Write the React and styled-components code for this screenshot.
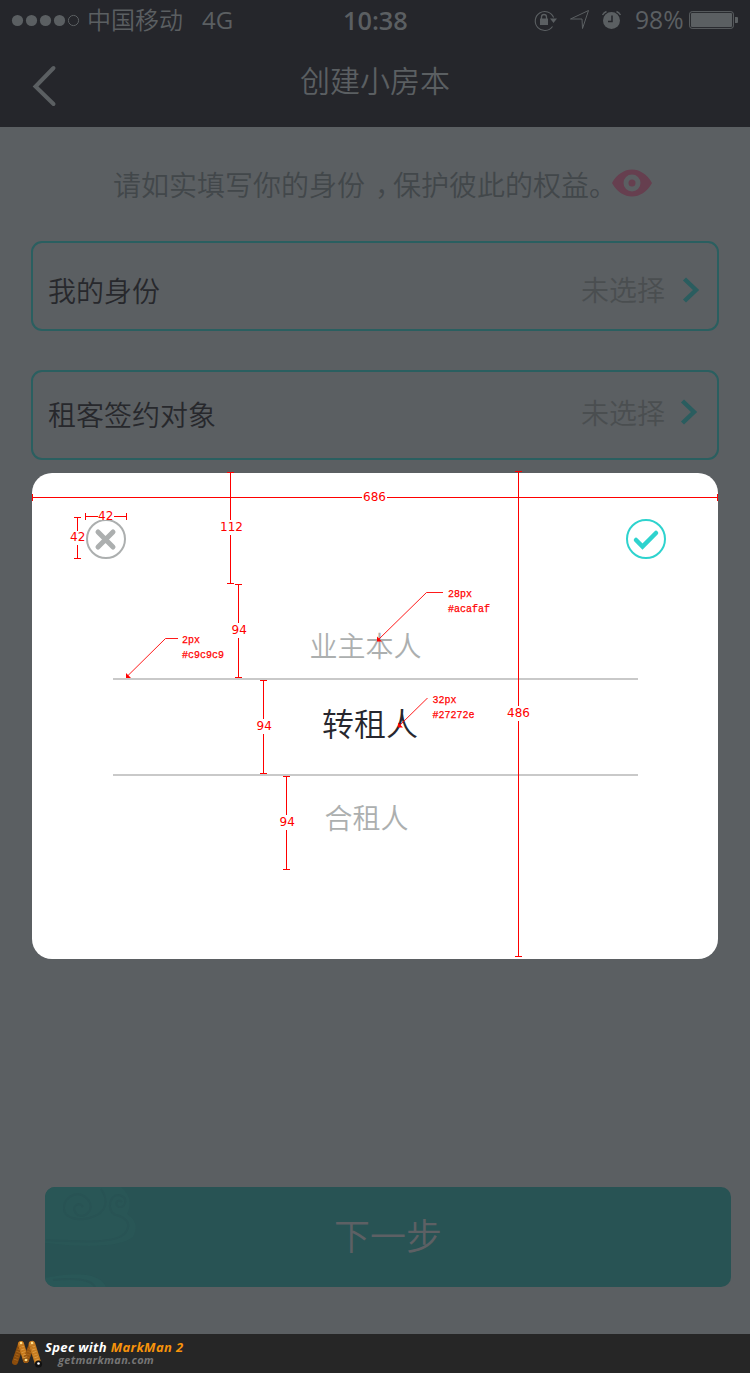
import React from 'react';
import styled, { createGlobalStyle } from 'styled-components';

const cjk = '"Noto Sans CJK SC", sans-serif';
const latin = '"Open Sans", "Noto Sans", sans-serif';

const GlobalStyle = createGlobalStyle`
  * { box-sizing: border-box; }
  body { margin: 0; background: #5b5f62; }
`;

const Screen = styled.div`
  position: relative;
  display: flex;
  flex-direction: column;
  width: 750px;
  height: 1373px;
  overflow: hidden;
  background: #5b5f62;
  font-family: ${cjk};
  font-weight: 350;
`;

const Header = styled.header`
  height: 127px;
  background: #25262b;
  color: #5b5f62;
`;

const StatusBar = styled.div`
  display: grid;
  grid-template-columns: 343px 65px 1fr;
  align-items: center;
  height: 40px;
`;

const StatusGroup = styled.div`
  display: flex;
  align-items: center;
  padding-left: ${(p) => p.$indent}px;
  white-space: nowrap;
`;

const Signal = styled.svg`
  flex: none;
  width: 70px;
  height: 14px;
  margin-right: 6px;
`;

const Carrier = styled.span`
  width: 115px;
  height: 40px;
  font-size: 24px;
  line-height: 38px;
`;

const StatusText = styled.span`
  font-family: ${latin};
  font-size: ${(p) => p.$size || 24}px;
  font-weight: ${(p) => (p.$bold ? 600 : 400)};
  line-height: 40px;
  white-space: nowrap;
`;

const StatusIcons = styled.svg`
  flex: none;
  width: 102px;
  height: 40px;
`;

const Battery = styled.svg`
  flex: none;
  width: 50px;
  height: 40px;
  margin-left: 5px;
`;

const NavBar = styled.div`
  display: grid;
  grid-template-columns: 100px 1fr 100px;
  height: 87px;
`;

const BackIcon = styled.svg`
  width: 26px;
  height: 42px;
  margin: 25px 0 0 32px;
`;

const Title = styled.h1`
  margin: 0;
  font-size: 30px;
  font-weight: 350;
  line-height: 78px;
  text-align: center;
`;

const Main = styled.main`
  flex: 1;
  display: flex;
  flex-direction: column;
  padding: 0 31px;
`;

const Notice = styled.div`
  display: flex;
  align-items: center;
  height: 114px;
  padding-left: 82px;
  color: #42474a;
  font-size: 28px;
  line-height: 114px;
  white-space: nowrap;
`;

const Comma = styled.span`
  display: inline-block;
  width: 28px;
  padding-left: 10px;
  font-feature-settings: "halt";
`;

const Eye = styled.svg`
  flex: none;
  width: 40px;
  height: 28px;
  margin: 0 0 2px -5px;
`;

const Field = styled.div`
  display: flex;
  justify-content: space-between;
  height: 90px;
  margin-bottom: ${(p) => p.$after || 0}px;
  padding: 0 17px 0 15px;
  border: 2px solid #2a5f60;
  border-radius: 11px;
  font-size: 28px;
`;

const FieldLabel = styled.span`
  color: #27282c;
  line-height: ${(p) => p.$line}px;
`;

const FieldValue = styled.span`
  display: flex;
  color: #4a4e50;
  line-height: ${(p) => p.$line}px;
`;

const Chevron = styled.svg`
  width: 18px;
  height: 26px;
  margin: ${(p) => p.$top}px ${(p) => p.$right}px 0 ${(p) => 17 - p.$right}px;
`;

const NextButton = styled.button`
  position: relative;
  width: 686px;
  height: 100px;
  margin: 727px 0 0 14px;
  padding: 0 0 5px;
  overflow: hidden;
  border: 0;
  border-radius: 10px;
  background: #285354;
  color: #5d6064;
  font: 350 36px/95px ${cjk};
`;

const Cloud = styled.svg`
  position: absolute;
  left: 0;
  top: 0;
  width: 110px;
  height: 100px;
`;

const Picker = styled.section`
  position: absolute;
  left: 32px;
  top: 473px;
  width: 686px;
  height: 486px;
  padding: 46px 51px 0 53px;
  border-radius: 20px;
  background: #fff;
`;

const PickerActions = styled.div`
  display: flex;
  justify-content: space-between;
  height: 65px;
`;

const RoundIcon = styled.svg`
  width: 42px;
  height: 42px;
`;

const Options = styled.ul`
  width: 525px;
  margin: 0 0 0 28px;
  padding: 0;
  list-style: none;
`;

const Option = styled.li`
  height: ${(p) => (p.$selected ? 98 : 94)}px;
  padding-right: ${(p) => p.$shift}px;
  border: solid #c9c9c9;
  border-width: ${(p) => (p.$selected ? '2px 0' : '0')};
  color: ${(p) => (p.$selected ? '#27272e' : '#acafaf')};
  font-size: ${(p) => (p.$selected ? 32 : 28)}px;
  line-height: ${(p) => p.$line}px;
  text-align: center;
`;

const Spec = styled.svg`
  position: absolute;
  left: 0;
  top: 0;
  width: 750px;
  height: 1000px;
  font-weight: 400;
  pointer-events: none;
`;

const Footer = styled.footer`
  display: flex;
  gap: 2px;
  height: 39px;
  padding: 4px 11px 0;
  background: #262626;
  font-family: ${latin};
  font-style: italic;
  font-weight: 700;
`;

const Logo = styled.svg`
  flex: none;
  width: 32px;
  height: 32px;
`;

const FooterText = styled.div`
  display: flex;
  flex-direction: column;
  color: #fff;
  font-size: 13px;
  line-height: 19px;
  letter-spacing: 0.35px;
  white-space: nowrap;
`;

const Brand = styled.span`
  color: #f7930b;
`;

const Site = styled.span`
  padding-left: 13px;
  color: #757575;
  font-size: 11px;
  line-height: 6px;
  letter-spacing: 0.3px;
`;

const H = ({ x1, x2, y, label, tx, ty, gap }) => (
  <g>
    <path shapeRendering="crispEdges" d={`M${x1} ${y + 0.5}H${gap[0]}M${gap[1]} ${y + 0.5}H${x2 + 1}M${x1 + 0.5} ${y - 3}v7M${x2 + 0.5} ${y - 3}v7`} stroke="#f00" fill="none" />
    <text x={tx} y={ty} fontSize="12" fontFamily="DejaVu Sans">{label}</text>
  </g>
);

const V = ({ x, y1, y2, label, tx, ty, gap }) => (
  <g>
    <path shapeRendering="crispEdges" d={`M${x + 0.5} ${y1}V${gap[0]}M${x + 0.5} ${gap[1]}V${y2 + 1}M${x - 3} ${y1 + 0.5}h7M${x - 3} ${y2 + 0.5}h7`} stroke="#f00" fill="none" />
    <text x={tx} y={ty} fontSize="12" fontFamily="DejaVu Sans">{label}</text>
  </g>
);

const Note = ({ tip, elbow, end, x, y, lines }) => (
  <g>
    <path d={`M${tip[0] + 1} ${tip[1] - 1}L${elbow[0]} ${elbow[1]}H${end}`} stroke="#f00" strokeWidth=".9" fill="none" />
    <path d={`M${tip[0]} ${tip[1] - 4.5}V${tip[1] + 0.5}H${tip[0] + 5}Z`} />
    {lines.map((l, i) => (
      <text key={l} x={x} y={y + i * 15} fontSize="10" stroke="#f00" strokeWidth=".25" fontFamily="Liberation Mono">{l}</text>
    ))}
  </g>
);

const ChevronIcon = ({ top, right }) => (
  <Chevron $top={top} $right={right} viewBox="0 0 18 26">
    <path d="M2.5 2L14 13 2.5 24" fill="none" stroke="#2a5d5f" strokeWidth="4.4" />
  </Chevron>
);

export default function App() {
  return (
    <Screen>
      <GlobalStyle />
      <Header>
        <StatusBar>
          <StatusGroup $indent={11}>
            <Signal viewBox="0 0 70 14" fill="currentColor">
              {[6.5, 20.5, 34.5, 48.5].map((x) => <circle key={x} cx={x} cy="7.5" r="5.6" />)}
              <circle cx="62.5" cy="7.5" r="5.1" fill="none" stroke="currentColor" />
            </Signal>
            <Carrier>中国移动</Carrier>
            <StatusText>4G</StatusText>
          </StatusGroup>
          <StatusText $bold $size={25.3}>10:38</StatusText>
          <StatusGroup $indent={125}>
            <StatusIcons viewBox="533 0 102 40" fill="none" stroke="currentColor">
              <path d="M552.5 26.5A9.5 9.5 0 1 1 553.6 17.5" strokeWidth="1.1" />
              <path d="M550 18.5h7l-3.500 4.500z" fill="currentColor" stroke="none" />
              <path d="M540 18.500h8v6.500h-8z" fill="currentColor" stroke="none" />
              <path d="M541.500 19v-2a2.500 2.500 0 0 1 5 0v2" strokeWidth="1.300" />
              <path d="M588.500 10.500L570.500 19h11.500l.5 9.500z" strokeWidth="1" />
              <circle cx="611.500" cy="20.500" r="8.500" fill="currentColor" stroke="none" />
              <path d="M602.500 15a8 8 0 0 1 4-3.500M616.500 11.500a8 8 0 0 1 4 3.500" strokeWidth="1.400" />
              <path d="M612 15.500v6h-4" stroke="#25262b" strokeWidth="1.500" />
            </StatusIcons>
            <StatusText $size={24.7}>98%</StatusText>
            <Battery viewBox="689 0 50 40">
              <rect x="689.600" y="11.600" width="43.800" height="16.800" rx="2.500" fill="none" stroke="currentColor" />
              <rect x="691" y="13" width="41" height="14" rx="1" fill="currentColor" />
              <path d="M735 17h2q1 0 1 1v4q0 1-1 1h-2z" fill="currentColor" />
            </Battery>
          </StatusGroup>
        </StatusBar>
        <NavBar>
          <BackIcon viewBox="0 0 26 42">
            <path d="M21.500 3L3.500 21.500 21.500 39" fill="none" stroke="currentColor" strokeWidth="4" strokeLinecap="round" />
          </BackIcon>
          <Title>创建小房本</Title>
        </NavBar>
      </Header>

      <Main>
        <Notice>
          <span>请如实填写你的身份<Comma>，</Comma>保护彼此的权益。</span>
          <Eye viewBox="0 0 40 28">
            <path fillRule="evenodd" fill="#663f4f" d="M0 14C10-4 30-4 40 14C30 32 10 32 0 14ZM28.500 14a8.500 8.500 0 1 0-17 0a8.500 8.500 0 0 0 17 0Z" />
            <circle cx="20" cy="14" r="3.500" fill="#663f4f" />
          </Eye>
        </Notice>
        <Field $after={39}>
          <FieldLabel $line={95}>我的身份</FieldLabel>
          <FieldValue $line={92}>未选择<ChevronIcon top={34} right={0} /></FieldValue>
        </Field>
        <Field>
          <FieldLabel $line={84}>租客签约对象</FieldLabel>
          <FieldValue $line={81}>未选择<ChevronIcon top={27} right={2} /></FieldValue>
        </Field>
        <NextButton>
          <Cloud viewBox="0 0 110 100" fill="none" strokeWidth="2">
            <path d="M0 0H76Q90 12 82 27Q96 36 88 50Q70 64 0 56Z" fill="#295656" />
            <path d="M38 20c-4-6-11-1-8 5c5 9 19 1 15-9C38 1 18 7 19 22c0 9 14 12 25 9c20-5 19-19 12-29" stroke="#285354" />
            <path d="M77 15c-5-4-8 3-3 5c6 1 9-8 3-11c-12-6-17 16-6 19c9 2 16 8 10 17c-8 12-44 10-80 8" stroke="#285354" />
            <path d="M0 91c28-6 55-6 61 9H0z" fill="#295757" />
            <path d="M8 93c20-2 38-1 42 7" stroke="#285354" />
          </Cloud>
          下一步
        </NextButton>
      </Main>

      <Picker>
        <PickerActions>
          <RoundIcon viewBox="0 0 42 42" fill="none" stroke="#acafaf">
            <circle cx="21" cy="20" r="19" strokeWidth="2" />
            <path d="M13 13l15 15M28 13l-15 15" strokeWidth="5" strokeLinecap="round" />
          </RoundIcon>
          <RoundIcon viewBox="0 0 42 42" fill="none" stroke="#2ed3ce">
            <circle cx="21" cy="20" r="19" strokeWidth="2" />
            <path d="M11 21l6.500 6.500L31 14" strokeWidth="4.500" strokeLinecap="round" />
          </RoundIcon>
        </PickerActions>
        <Options>
          <Option $shift={20} $line={123}>业主本人</Option>
          <Option $selected $shift={11} $line={85}>转租人</Option>
          <Option $shift={18} $line={83}>合租人</Option>
        </Options>
      </Picker>

      <Spec viewBox="0 0 750 1000" fill="#f00">
        <H x1={32} x2={717} y={497} label="686" tx={363} ty={501} gap={[362, 387]} />
        <path d="M98 511h17v9H98z" fill="#fff" />
        <H x1={85} x2={126} y={516} label="42" tx={98} ty={520} gap={[98, 114]} />
        <V x={77} y1={517} y2={558} label="42" tx={70} ty={541} gap={[531, 545]} />
        <V x={230} y1={472} y2={583} label="112" tx={220} ty={531} gap={[520, 535]} />
        <V x={238} y1={584} y2={677} label="94" tx={231.5} ty={634} gap={[623, 638]} />
        <V x={263} y1={680} y2={773} label="94" tx={256.5} ty={730} gap={[719, 734]} />
        <V x={286} y1={776} y2={869} label="94" tx={279.5} ty={826} gap={[815, 830]} />
        <V x={518} y1={471} y2={956} label="486" tx={507} ty={717} gap={[706, 721]} />
        <Note tip={[377, 641]} elbow={[426.5, 592.5]} end={443} x={448} y={597} lines={['28px', '#acafaf']} />
        <Note tip={[126, 677.5]} elbow={[165.5, 638.5]} end={178} x={182} y={643} lines={['2px', '#c9c9c9']} />
        <Note tip={[398, 727]} elbow={[427, 698.5]} end={427.5} x={432.500} y={703} lines={['32px', '#27272e']} />
      </Spec>

      <Footer>
        <Logo viewBox="0 0 32 32" fill="none" strokeLinecap="round">
          <path d="M10 6L4 24" stroke="#8a4c0c" strokeWidth="6" />
          <path d="M10 6L15 22" stroke="#c87a1c" strokeWidth="6" />
          <path d="M21 6L15 22" stroke="#96540f" strokeWidth="6" />
          <path d="M21 6L27 25" stroke="#c67c20" strokeWidth="6.500" />
          <path d="M10 6L15 22M21 6L27 25" stroke="#e0a24c" strokeWidth="4" strokeDasharray=".7 2" strokeLinecap="butt" />
          <path d="M10 6L4 24M21 6L15 22" stroke="#b06c1e" strokeWidth="4" strokeDasharray=".7 2" strokeLinecap="butt" />
          <circle cx="10" cy="5" r="1.300" fill="#ffe08a" />
          <circle cx="21" cy="5" r="1.300" fill="#ffe08a" />
          <circle cx="15" cy="22" r="1.300" fill="#ffe08a" />
          <circle cx="27.500" cy="26" r="3.600" fill="#111" />
          <circle cx="27.500" cy="25.500" r="1.300" fill="#fff" />
        </Logo>
        <FooterText>
          <span>Spec with <Brand>MarkMan 2</Brand></span>
          <Site>getmarkman.com</Site>
        </FooterText>
      </Footer>
    </Screen>
  );
}
